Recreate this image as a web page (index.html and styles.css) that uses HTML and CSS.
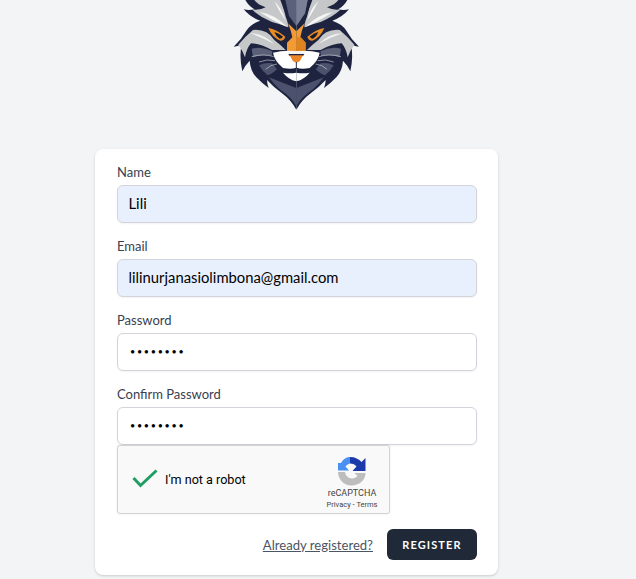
FILE: index.html
```html
<!DOCTYPE html>
<html lang="en">
<head>
<meta charset="utf-8">
<title>Register</title>
<link rel="stylesheet" href="styles.css">
</head>
<body>
<main class="page">
  <div class="logo">
    <svg class="logo-svg" viewBox="0 0 480 345" width="160" height="115" aria-hidden="true">
      <defs>
        <g id="cat-half">
          <path fill="#1e2440" d="M238 0 L85 0 Q95 18 112 28 Q95 32 80 28 Q100 52 130 62 Q100 72 88 92 Q72 120 50 140 Q62 140 74 132 Q66 170 76 214 Q84 196 98 182 Q100 212 118 232 Q135 250 155 264 Q150 250 150 240 Q170 262 195 280 Q222 300 237 328 L238 328 Z"/>
          <path fill="#c6c7c9" d="M112 0 L194 0 L206 50 Q214 70 214 82 Q190 72 165 66 Q130 52 104 28 Q128 32 146 22 Q122 14 112 0 Z"/>
          <path fill="#f6f6f7" d="M128 36 Q172 42 212 82 Q175 66 128 36 Z"/>
          <path fill="#f6f6f7" d="M172 4 Q194 24 206 62 Q186 34 172 4 Z"/>
          <path fill="#1e2440" d="M190 0 L206 0 L214 60 Q200 30 190 0 Z"/>
          <path fill="#c6c7c9" d="M64 134 Q86 108 108 90 Q150 86 172 120 Q190 134 206 150 L165 150 Q128 130 102 130 Q88 146 84 172 Q76 150 64 134 Z"/>
          <path fill="#f0f0f1" d="M100 100 Q135 98 172 132 Q135 112 100 100 Z"/>
          <path fill="#5a6077" d="M104 146 Q135 138 166 154 L164 168 Q130 162 108 172 Z"/>
          <path fill="#4c526d" d="M126 196 Q145 186 165 190 L180 208 Q162 224 152 226 Q136 214 126 196 Z"/>
          <path fill="#e98c24" d="M154 84 Q178 88 205 110 Q202 122 190 122 Q165 112 154 84 Z"/>
          <path fill="#141a30" d="M172 96 Q186 100 198 110 Q194 116 188 116 Q176 108 172 96 Z"/>
          <path fill="#f29a33" d="M213 70 L238 94 L238 155 L210 152 L210 128 L226 112 Q222 90 213 70 Z"/>
          <path fill="#ffffff" d="M238 154 L214 152 Q190 152 168 158 Q172 182 198 204 Q220 208 238 204 Z"/>
          <path fill="#ffffff" d="M238 218 Q218 222 198 218 Q214 238 238 244 Z"/>
          <path fill="#4c526d" d="M156 232 Q195 248 238 264 L238 318 Q222 290 188 268 Q168 250 156 232 Z"/>
          <path fill="none" stroke="#eceded" stroke-width="1.600" d="M104 170 Q140 160 170 170 M126 186 Q150 176 174 182 M146 208 Q160 194 180 192"/>
        </g>
      </defs>
      <use href="#cat-half"/>
      <use href="#cat-half" transform="translate(476 0) scale(-1 1)"/>
      <path fill="#5b617a" d="M205 0 L272 0 L264 40 L238 78 L216 48 Z"/>
      <path fill="#7a8096" d="M238 0 L272 0 L264 40 L238 78 Z"/>
      <path fill="#dd831f" d="M238 112 L252 112 L266 128 L264 152 L238 152 Z"/>
      <path fill="#f3f3f3" d="M212 156 Q238 150 264 156 L262 164 L214 164 Z"/>
      <path fill="#1e2440" d="M214 162 L262 162 L258 168 L218 168 Z"/>
      <path fill="#ec8526" d="M218 166 L258 166 L248 184 L238 188 L228 184 Z"/>
      <path fill="none" stroke="#141a30" stroke-width="2.500" d="M238 186 L238 204 M204 208 Q224 214 238 204 Q252 214 274 208"/>
    </svg>
  </div>

  <form class="card">
    <div class="field">
      <label class="label" for="name">Name</label>
      <input class="input input-filled" id="name" type="text" value="Lili">
    </div>
    <div class="field">
      <label class="label" for="email">Email</label>
      <input class="input input-filled" id="email" type="text" value="lilinurjanasiolimbona@gmail.com">
    </div>
    <div class="field">
      <label class="label" for="password">Password</label>
      <input class="input input-secret" id="password" type="password" value="password">
    </div>
    <div class="field">
      <label class="label" for="confirm">Confirm Password</label>
      <input class="input input-secret" id="confirm" type="password" value="password">
    </div>

    <div class="captcha">
      <svg class="captcha-check" viewBox="0 0 26 20" width="26" height="20" aria-hidden="true">
        <path fill="none" stroke="#1f9d63" stroke-width="3" d="M1.500 9 L8.500 16.500 L24.500 1.500"/>
      </svg>
      <span class="captcha-text">I'm not a robot</span>
      <div class="captcha-brand">
        <svg class="captcha-logo" viewBox="0 0 30 29" width="30" height="29" aria-hidden="true">
          <path fill="#1c3aa9" d="M13 0 C18 0 22 2 24.500 5 L28.500 1 L28.500 14 L15.500 14 L19.500 9.500 C18 7.500 16 6.500 13 6.500 Z"/>
          <path fill="#4a90f0" d="M13 0 L13 6.500 C11 7 9.500 8 8.500 9.500 L12 13.500 L1 13.500 L1 6 L4 6 C6 2.500 9 0 13 0 Z"/>
          <path fill="#bdbdbd" d="M1 15 L8 15 C8.500 18.500 11 21.500 15 21.500 C17.500 21.500 19 20.500 20.500 19 L17.500 16 L28.500 16 C28.500 23.500 22 28.500 14.500 28.500 C7 28.500 1 22.500 1 15 Z"/>
        </svg>
        <span class="captcha-name">reCAPTCHA</span>
        <span class="captcha-links">Privacy - Terms</span>
      </div>
    </div>

    <div class="actions">
      <a class="login-link" href="#">Already registered?</a>
      <button class="btn" type="button">Register</button>
    </div>
  </form>
</main>
</body>
</html>
```

FILE: styles.css
```css
* { box-sizing: border-box; }

html, body {
  margin: 0;
  padding: 0;
  height: 100%;
}

body {
  background: #f3f4f6;
  font-family: "Lato", "Liberation Sans", sans-serif;
  overflow: hidden;
}

.page {
  width: 403px;
  margin-left: 95px;
  display: flex;
  flex-direction: column;
  align-items: center;
}

.logo {
  height: 149px;
  display: flex;
  align-items: flex-start;
}

.logo-svg { display: block; }

.card {
  width: 100%;
  height: 426px;
  padding: 14px 21px 15px 22px;
  background: #fff;
  border-radius: 8px;
  box-shadow: 0 1px 3px rgba(0, 0, 0, .1), 0 1px 2px rgba(0, 0, 0, .08);
}

.field + .field { margin-top: 14px; }

.label {
  display: block;
  height: 20px;
  margin-bottom: 2px;
  font-size: 13px;
  line-height: 18px;
  font-weight: 400;
  color: #374151;
}

.input {
  display: block;
  width: 100%;
  height: 38px;
  padding: 0 11px 2px 10.500px;
  border: 1px solid #d1d5db;
  border-radius: 6px;
  background: #fff;
  font-family: inherit;
  font-size: 14.800px;
  color: #000;
  box-shadow: 0 1px 2px rgba(0, 0, 0, .05);
  outline: none;
}

.input-filled { background: #e8f0fe; }
.input-secret { font-size: 9px; letter-spacing: 1.700px; padding-left: 12px; }

.captcha {
  width: 273px;
  height: 69px;
  display: flex;
  align-items: center;
  background: #f9f9f9;
  border: 1px solid #d3d3d3;
  border-radius: 3px;
  font-family: "Roboto", sans-serif;
  color: #000;
  box-shadow: 0 0 3px rgba(0, 0, 0, .08);
}

.captcha-check { margin-left: 14px; margin-top: -2px; }

.captcha-text {
  margin-left: 7px;
  font-size: 12.600px;
}

.captcha-brand {
  margin-left: auto;
  width: 74px;
  padding-top: 8px;
  display: flex;
  flex-direction: column;
  align-items: center;
  color: #444;
}

.captcha-name {
  margin-top: 2px;
  font-size: 9px;
  line-height: 11px;
}

.captcha-links {
  font-size: 7.500px;
  line-height: 11px;
}

.actions {
  margin-top: 15px;
  display: flex;
  justify-content: flex-end;
  align-items: center;
  gap: 14px;
}

.login-link {
  font-size: 13.100px;
  color: #4b5563;
  text-decoration: underline;
}

.btn {
  width: 90px;
  height: 31px;
  padding: 0;
  border: 0;
  border-radius: 6px;
  background: #1f2937;
  color: #fff;
  font-family: inherit;
  font-size: 11px;
  font-weight: 700;
  letter-spacing: 1.100px;
  text-transform: uppercase;
}
```
